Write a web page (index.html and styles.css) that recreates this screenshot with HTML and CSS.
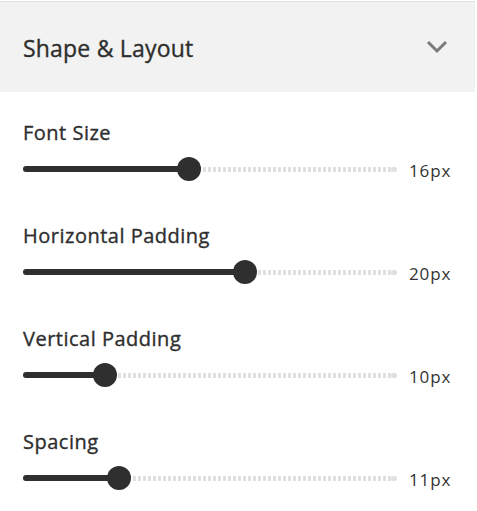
FILE: index.html
```html
<!DOCTYPE html>
<html>
<head>
<meta charset="utf-8">
<link rel="stylesheet" href="styles.css">
</head>
<body>
<div class="panel">
  <div class="header">
    <span class="title">Shape &amp; Layout</span>
    <svg class="chevron" width="22" height="14" viewBox="0 0 22 14"><path d="M2 2 L11 11 L20 2" fill="none" stroke="#7b7b7b" stroke-width="3"/></svg>
  </div>
  <div class="content">
    <div class="field">
      <div class="label">Font Size</div>
      <div class="slider-row">
        <div class="track" style="--p:0.44">
          <div class="rest"></div>
          <div class="fill"></div>
          <div class="thumb"></div>
        </div>
        <span class="value">16px</span>
      </div>
    </div>
    <div class="field">
      <div class="label">Horizontal Padding</div>
      <div class="slider-row">
        <div class="track" style="--p:0.6">
          <div class="rest"></div>
          <div class="fill"></div>
          <div class="thumb"></div>
        </div>
        <span class="value">20px</span>
      </div>
    </div>
    <div class="field">
      <div class="label">Vertical Padding</div>
      <div class="slider-row">
        <div class="track" style="--p:0.2">
          <div class="rest"></div>
          <div class="fill"></div>
          <div class="thumb"></div>
        </div>
        <span class="value">10px</span>
      </div>
    </div>
    <div class="field">
      <div class="label">Spacing</div>
      <div class="slider-row">
        <div class="track" style="--p:0.24">
          <div class="rest"></div>
          <div class="fill"></div>
          <div class="thumb"></div>
        </div>
        <span class="value">11px</span>
      </div>
    </div>
  </div>
</div>
</body>
</html>
```
FILE: styles.css
```css
html, body {
  margin: 0;
  padding: 0;
  background: #ffffff;
}
body {
  font-family: "Open Sans", "Noto Sans", sans-serif;
  color: #333333;
}
.panel {
  width: 475px;
  margin-top: 1px;
  border-top: 1px solid #e0e0e0;
}
.header {
  height: 90px;
  background: #f2f2f2;
  display: flex;
  align-items: center;
  justify-content: space-between;
  padding: 0 27px 0 23px;
  box-sizing: border-box;
}
.title {
  font-size: 23px;
  color: #2e2e2e;
  letter-spacing: 0.2px;
  -webkit-text-stroke: 0.35px #2e2e2e;
  position: relative;
  top: 1px;
}
.chevron {
  display: block;
}
.content {
  padding: 28px 0 0 23px;
  display: flex;
  flex-direction: column;
  gap: 42px;
}
.field {
  display: flex;
  flex-direction: column;
  gap: 11px;
}
.label {
  font-size: 20px;
  line-height: 26px;
  height: 26px;
  color: #2e2e2e;
  letter-spacing: 0.5px;
  -webkit-text-stroke: 0.35px #2e2e2e;
}
.slider-row {
  display: flex;
  align-items: center;
  height: 24px;
}
.track {
  position: relative;
  width: 374px;
  height: 24px;
}
.rest {
  position: absolute;
  left: 0;
  right: 0;
  top: 10px;
  height: 5px;
  border-radius: 3px;
  background: repeating-linear-gradient(90deg, #e0e0e0 0 3px, transparent 3px 5px);
}
.rest::after {
  content: "";
  position: absolute;
  right: 0;
  top: 0;
  width: 6px;
  height: 5px;
  border-radius: 3px;
  background: #e0e0e0;
}
.fill {
  position: absolute;
  left: 0;
  top: 9px;
  height: 6px;
  border-radius: 3px;
  background: #2f2f2f;
  width: calc(12px + var(--p) * (100% - 24px));
}
.thumb {
  position: absolute;
  top: 0;
  width: 24px;
  height: 24px;
  border-radius: 50%;
  background: #2f2f2f;
  left: calc(var(--p) * (100% - 24px));
}
.value {
  margin-left: 12px;
  font-size: 17px;
  letter-spacing: 0.9px;
  color: #333333;
  position: relative;
  top: 1px;
}
```
